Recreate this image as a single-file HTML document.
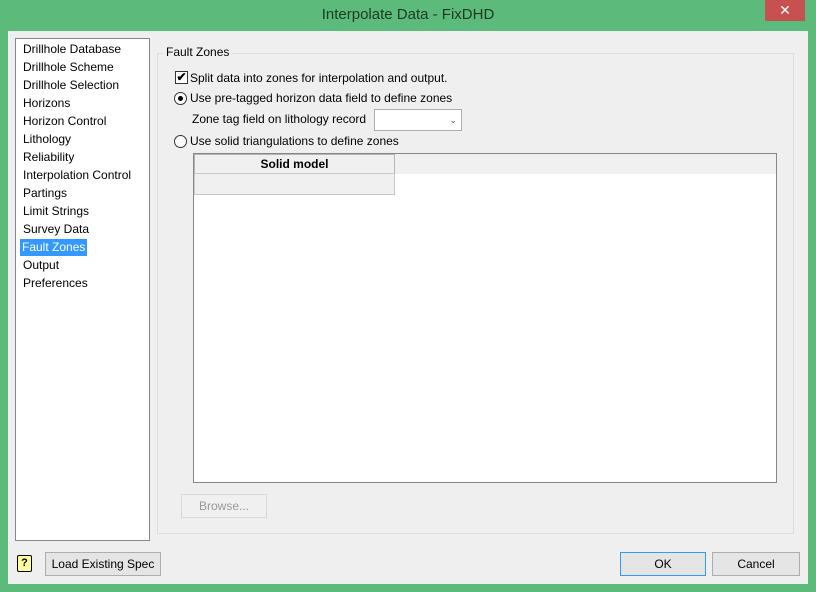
<!DOCTYPE html>
<html><head><style>
*{box-sizing:border-box;margin:0;padding:0}
body{width:816px;height:592px;background:#5cba7b;font-family:"Liberation Sans",sans-serif;font-size:12px;color:#000;position:relative;overflow:hidden}
.abs{position:absolute}
.title{left:0;top:6px;width:816px;text-align:center;font-size:15px;color:#1e3a24}
.close{left:765px;top:0;width:40px;height:21px;background:#c75050;color:#fff;text-align:center;font-size:14px;line-height:21px}
.client{left:8px;top:31px;width:800px;height:553px;background:#efefef}
.list{left:15px;top:38px;width:135px;height:503px;background:#fff;border:1px solid #828790}
.item{position:absolute;left:5px;height:17px;line-height:17px;padding:0 2px}
.sel{background:#3399ff;color:#fff}
.grp{left:157px;top:53px;width:637px;height:481px;border:1px solid #dcdcdc}
.lbl{background:#efefef;padding:0 3px}
.btn{border:1px solid #adadad;background:#e5e5e5;text-align:center;line-height:22px}
</style></head><body>
<div class="abs title">Interpolate Data - FixDHD</div>
<div class="abs close">✕</div>
<div class="abs client"></div>
<div class="abs list">
<div class="item" style="top:2px">Drillhole Database</div>
<div class="item" style="top:20px">Drillhole Scheme</div>
<div class="item" style="top:38px">Drillhole Selection</div>
<div class="item" style="top:56px">Horizons</div>
<div class="item" style="top:74px">Horizon Control</div>
<div class="item" style="top:92px">Lithology</div>
<div class="item" style="top:110px">Reliability</div>
<div class="item" style="top:128px">Interpolation Control</div>
<div class="item" style="top:146px">Partings</div>
<div class="item" style="top:164px">Limit Strings</div>
<div class="item" style="top:182px">Survey Data</div>
<div class="item sel" style="top:200px;left:4px">Fault Zones</div>
<div class="item" style="top:218px">Output</div>
<div class="item" style="top:236px">Preferences</div>
</div>
<div class="abs grp"></div>
<div class="abs lbl" style="left:163px;top:45px">Fault Zones</div>
<div class="abs" style="left:175px;top:71px;width:13px;height:13px;border:1px solid #333;background:#fff;font-size:12px;line-height:11px;text-align:center;font-weight:bold">✔</div>
<div class="abs" style="left:190px;top:71px">Split data into zones for interpolation and output.</div>
<div class="abs" style="left:174px;top:92px;width:13px;height:13px;border:1px solid #333;border-radius:50%;background:#fff"><div style="position:absolute;left:3px;top:3px;width:5px;height:5px;border-radius:50%;background:#000"></div></div>
<div class="abs" style="left:190px;top:91px">Use pre-tagged horizon data field to define zones</div>
<div class="abs" style="left:192px;top:112px">Zone tag field on lithology record</div>
<div class="abs" style="left:374px;top:109px;width:88px;height:22px;border:1px solid #adadad;background:#fff;font-size:9px;color:#555;text-align:right;padding-right:4px;line-height:20px">&#8964;</div>
<div class="abs" style="left:174px;top:135px;width:13px;height:13px;border:1px solid #333;border-radius:50%;background:#fff"></div>
<div class="abs" style="left:190px;top:134px">Use solid triangulations to define zones</div>
<div class="abs" style="left:193px;top:153px;width:584px;height:330px;border:1px solid #828790;background:#fff"></div>
<div class="abs" style="left:194px;top:154px;width:582px;height:20px;background:#f0f0f0"></div>
<div class="abs" style="left:194px;top:154px;width:201px;height:20px;border:1px solid #b5b5b5;text-align:center;font-weight:bold;line-height:18px">Solid model</div>
<div class="abs" style="left:194px;top:173px;width:201px;height:22px;border:1px solid #c8c8c8;background:#f0f0f0"></div>
<div class="abs btn" style="left:181px;top:494px;width:86px;height:24px;color:#999;background:#f0f0f0;border-color:#d9d9d9">Browse...</div>
<div class="abs" style="left:17px;top:555px;width:15px;height:17px;border:1px solid #000;border-radius:2px;background:#ffffa0;font-size:11px;font-weight:bold;text-align:center;line-height:14px">?</div>
<div class="abs btn" style="left:45px;top:552px;width:116px;height:24px">Load Existing Spec</div>
<div class="abs btn" style="left:620px;top:552px;width:86px;height:24px;border-color:#3399ff">OK</div>
<div class="abs btn" style="left:712px;top:552px;width:88px;height:24px">Cancel</div>
</body></html>
